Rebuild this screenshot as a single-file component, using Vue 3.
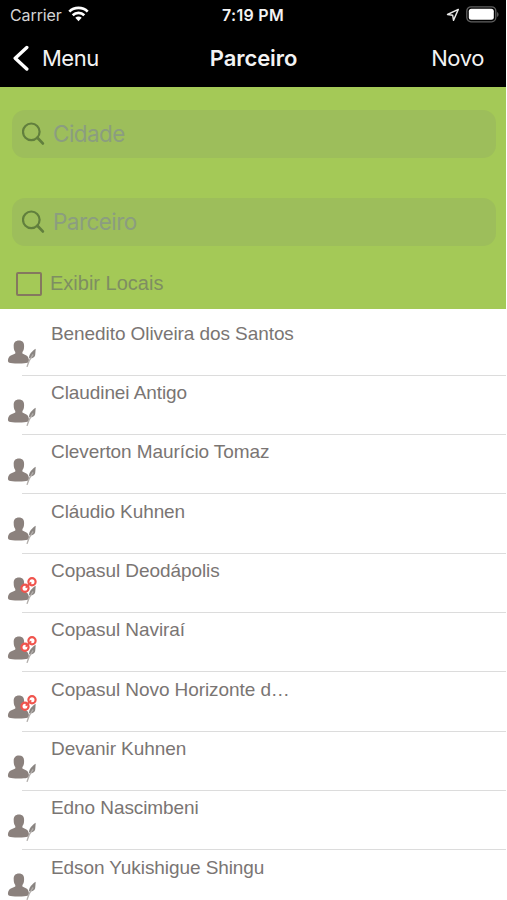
<script setup>
const fields = [
  { label: 'Cidade' },
  { label: 'Parceiro' },
]

const partners = [
  { name: 'Benedito Oliveira dos Santos' },
  { name: 'Claudinei Antigo' },
  { name: 'Cleverton Maurício Tomaz' },
  { name: 'Cláudio Kuhnen' },
  { name: 'Copasul Deodápolis', linked: true },
  { name: 'Copasul Naviraí', linked: true },
  { name: 'Copasul Novo Horizonte d…', linked: true },
  { name: 'Devanir Kuhnen' },
  { name: 'Edno Nascimbeni' },
  { name: 'Edson Yukishigue Shingu' },
]
</script>

<template>
  <div class="screen">
    <header class="top">
      <div class="status">
        <div class="carrier">
          <span>Carrier</span>
          <svg class="wifi" width="21" height="16" viewBox="0 0 21 16">
            <g fill="none" stroke="#fff" stroke-width="2.7">
              <path d="M1.3 5.6C6.3.7 14.7.7 19.7 5.6" />
              <path d="M4.7 9.2C8 6.1 13 6.1 16.3 9.2" />
            </g>
            <path d="M7.3 11.8C9.1 10.1 11.9 10.1 13.7 11.8L10.5 15.2Z" fill="#fff" />
          </svg>
        </div>
        <span class="time">7:19 PM</span>
        <div class="indicators">
          <svg width="14" height="14" viewBox="0 0 14 14">
            <path d="M12.3 1.4L1.5 6.5L6.7 7.3L7.5 12.4Z" fill="none" stroke="#e8e8e8" stroke-width="1.4" stroke-linejoin="round" />
          </svg>
          <svg width="33" height="17" viewBox="0 0 33 17">
            <rect x=".8" y=".8" width="29" height="15" rx="4.2" fill="none" stroke="#606060" stroke-width="1.3" />
            <rect x="2.8" y="2.8" width="25" height="11" rx="2.5" fill="#fff" />
            <path d="M31.2 6v5c1.7-.7 1.7-4.3 0-5Z" fill="#666" />
          </svg>
        </div>
      </div>
      <nav class="nav">
        <div class="back">
          <svg width="17" height="27" viewBox="0 0 17 27">
            <path d="M13.8 2.5L2.2 13.2L13.8 24" fill="none" stroke="#fff" stroke-width="3.4" stroke-linecap="round" stroke-linejoin="round" />
          </svg>
          <span class="menu">Menu</span>
        </div>
        <span class="title">Parceiro</span>
        <span class="new">Novo</span>
      </nav>
    </header>

    <section class="filters">
      <div v-for="f in fields" :key="f.label" class="search">
        <svg width="24" height="24" viewBox="0 0 24 24">
          <circle cx="9.3" cy="9.8" r="8.3" fill="none" stroke="#617f3d" stroke-width="2.2" />
          <path d="M15.4 15.8L20.8 21.4" stroke="#617f3d" stroke-width="2.8" stroke-linecap="round" />
        </svg>
        <span class="placeholder">{{ f.label }}</span>
      </div>
      <div class="check">
        <span class="box"></span>
        <span class="check-label">Exibir Locais</span>
      </div>
    </section>

    <ul class="list">
      <li v-for="p in partners" :key="p.name" class="row">
        <svg class="person" width="32" height="32" viewBox="0 0 32 32">
          <path d="M11.9 1.4C8.5 1.4 6.5 3.5 6.7 7.2C6.7 10 7.3 12 8.3 13V14.6C5.6 16.1 1.8 16.2 1 20.8C.7 23.6 1.4 24.6 11.4 24.6C21.4 24.6 22.2 23.6 21.9 20.8C21.3 16.2 18 16.1 15.4 14.6V13C16.5 12 17.1 10 17.1 7.2C17.3 3.5 15.4 1.4 11.9 1.4Z" fill="#8b817d" />
          <path d="M28.7 9.8C25.4 12 21.8 15.2 22 19.2C24.3 19.8 27.8 18.8 28.2 16Z" fill="#8a8582" />
          <path d="M26.2 15.5C24 18.6 21.4 21.5 20 27.8" fill="none" stroke="#b3afac" stroke-width="1.3" />
          <g v-if="p.linked" fill="#fff" stroke="#f0544d" stroke-width="2.2">
            <circle cx="18" cy="12.3" r="3.6" />
            <circle cx="25" cy="5.7" r="3.6" />
            <path d="M18.7 11.7L24.3 6.4" stroke-width="1.6" />
          </g>
        </svg>
        <div class="cell"><span class="name">{{ p.name }}</span></div>
      </li>
    </ul>
  </div>
</template>

<style>
body { background: #fff; overflow: hidden; }
</style>

<style scoped>
.screen {
  width: 506px;
  height: 900px;
  overflow: hidden;
  background: #fff;
  font-family: Inter, "Liberation Sans", sans-serif;
}
.top { height: 87px; background: #000; color: #f3f3f3; }
.status {
  display: grid;
  grid-template-columns: 1fr auto 1fr;
  height: 29px;
  align-items: center;
  padding: 0 7px 0 10px;
  font-size: 16px;
}
.carrier { display: flex; align-items: center; gap: 6px; color: #d4d4d4; letter-spacing: -.1px; }
.wifi { margin-top: -2px; }
.time { font-weight: 600; font-size: 16px; letter-spacing: .3px; margin-left: -3px; }
.indicators { display: flex; justify-content: flex-end; align-items: center; gap: 6px; }
.nav {
  display: grid;
  grid-template-columns: 1fr auto 1fr;
  align-items: center;
  height: 58px;
  padding: 0 22px 0 13px;
  font-size: 22px;
}
.back { display: flex; align-items: center; gap: 12px; }
.title { font-weight: 600; font-size: 22px; letter-spacing: -.08px; margin-left: 10px; }
.new { justify-self: end; letter-spacing: -.4px; }
.menu { letter-spacing: -.5px; }
.filters { height: 222px; padding: 23px 10px 0 12px; box-sizing: border-box; background: #a4c957; }
.search {
  display: flex;
  align-items: center;
  gap: 7px;
  height: 48px;
  margin-bottom: 40px;
  padding-left: 10px;
  border-radius: 13px;
  background: #9dbe5b;
  color: #8b9d80;
  font-size: 22.5px;
  letter-spacing: -.55px;
}
.placeholder { margin-top: -1px; }
.search + .check { margin-top: -15px; }
.check { display: flex; align-items: center; gap: 8px; padding-left: 4px; height: 25px; }
.box { box-sizing: border-box; width: 26px; height: 24px; border: 2px solid #85785f; border-radius: 2px; }
.check-label { color: #7e8e62; font: 20px/25px "Liberation Sans", sans-serif; }
.list { margin: 0; padding: 7.5px 0 0; list-style: none; }
.row { display: flex; height: 59.33px; }
.person { flex: none; width: 32px; margin: 22px 0 0 7px; }
.cell { flex: 1; margin-left: -17px; padding-left: 29px; border-bottom: 1px solid #dcdcdc; }
.name { display: block; color: #7a7573; font: 19px/22px "Liberation Sans", sans-serif; margin-top: 6.3px; letter-spacing: -.08px; white-space: nowrap; }
</style>
